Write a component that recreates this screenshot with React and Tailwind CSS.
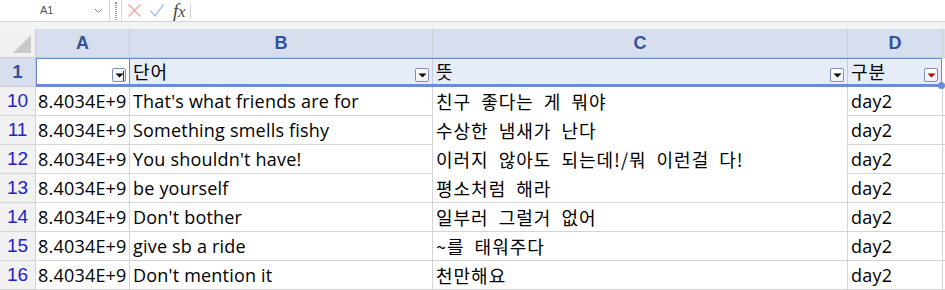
const cols = [
  { key: "A", w: "w-[94px]" },
  { key: "B", w: "w-[303px]" },
  { key: "C", w: "w-[415px]" },
  { key: "D", w: "w-[95px]" },
];

const rows = [
  ["10", "8.4034E+9", "That's what friends are for", "친구 좋다는 게 뭐야", "day2"],
  ["11", "8.4034E+9", "Something smells fishy", "수상한 냄새가 난다", "day2"],
  ["12", "8.4034E+9", "You shouldn't have!", "이러지 않아도 되는데!/뭐 이런걸 다!", "day2"],
  ["13", "8.4034E+9", "be yourself", "평소처럼 해라", "day2"],
  ["14", "8.4034E+9", "Don't bother", "일부러 그럴거 없어", "day2"],
  ["15", "8.4034E+9", "give sb a ride", "~를 태워주다", "day2"],
  ["16", "8.4034E+9", "Don't mention it", "천만해요", "day2"],
];

const font = { fontFamily: '"Open Sans", "Noto Sans CJK KR", sans-serif' };
const krFont = { fontFamily: '"Noto Sans CJK KR", "Open Sans", sans-serif' };
const labelFont = { fontFamily: '"Liberation Sans", sans-serif' };

function FilterButton({ red, sort }) {
  return (
    <div className="absolute bottom-[2px] right-[3px] flex h-[14px] w-[14px] items-end justify-center rounded-[2px] border border-[#7d90b8] bg-gradient-to-b from-white to-[#eef1f7] pb-[3px]">
      <svg width="9" height="5" viewBox="0 0 9 5">
        <path d="M0.5 0.5 L8.5 0.5 L4.5 4.5 Z" fill={red ? "#c00000" : "#000"} />
      </svg>
      {sort && <div className="absolute right-[1px] top-[2px] h-[10px] w-px bg-[#333]" />}
    </div>
  );
}

export default function App() {
  return (
    <div className="h-[290px] w-[945px] overflow-hidden bg-white text-black" style={font}>
      {/* formula bar */}
      <div className="flex h-[22px] items-stretch border-b border-[#d4d4d4] bg-white">
        <div className="flex w-[110px] items-center justify-between border-r border-[#d4d4d4] pl-[40px] pr-[6px]">
          <span className="text-[11px] text-[#555]" style={labelFont}>A1</span>
          <svg width="9" height="6" viewBox="0 0 9 6">
            <path d="M1 1 L4.5 4.5 L8 1" fill="none" stroke="#888" strokeWidth="1" />
          </svg>
        </div>
        <div className="flex w-[11px] items-center justify-center">
          <div className="h-[18px] w-[2px] border-x border-dotted border-[#999]" />
        </div>
        <div className="flex flex-1 items-center border-l border-[#d4d4d4] pl-[5px]">
          <svg width="15" height="15" viewBox="0 0 15 15" className="mr-[7px]">
            <path d="M1.5 1.5 L13.5 13.5 M13.5 1.5 L1.5 13.5" stroke="#f3a3a3" strokeWidth="1.4" />
          </svg>
          <svg width="16" height="15" viewBox="0 0 16 15" className="mr-[8px]">
            <path d="M1.5 7.5 L6 13 L14.5 1.5" fill="none" stroke="#a9c4ee" strokeWidth="1.5" />
          </svg>
          <span className="mr-[5px] text-[19px] italic leading-none text-[#444]" style={{ fontFamily: '"Liberation Serif", serif' }}>
            f<span className="text-[16px]">x</span>
          </span>
          <div className="h-[16px] w-px bg-[#d4d4d4]" />
        </div>
      </div>
      <div className="h-[7px] bg-[#f3f3f3]" />

      {/* column headers */}
      <div className="flex h-[29px] border-b border-[#c6cad3]">
        <div className="relative w-[36px] border-r border-[#c6cad3] bg-[#f1f1f1]">
          <div className="absolute bottom-[4px] right-[4px] h-0 w-0 border-b-[18px] border-l-[18px] border-b-[#c9c9c9] border-l-transparent" />
        </div>
        {cols.map((c) => (
          <div
            key={c.key}
            className={`${c.w} flex items-center justify-center border-r border-[#c9cdd6] bg-[#d7deee] text-[18px] font-bold text-[#34519a]`}
            style={labelFont}
          >
            {c.key}
          </div>
        ))}
        <div className="flex-1 bg-[#d7deee]" />
      </div>

      {/* row 1 (header row, selected) */}
      <div className="flex h-[29px]">
        <div
          className="flex w-[36px] items-center justify-center border-b border-r border-[#c6cad3] bg-[#d7deee] text-[18px] font-bold text-[#34519a]"
          style={labelFont}
        >
          1
        </div>
        <div className="relative flex w-[906px] border-y border-r border-[#6d8ad6] border-b-[3px] text-[18px] leading-[24px] tracking-[1px]" style={krFont}>
          <div className="relative w-[94px] border-x border-[#6d8ad6] bg-white">
            <FilterButton sort />
          </div>
          <div className="relative flex w-[303px] items-start border-r border-[#c3cbe0] bg-[#e6ecf8] pl-[3px]">
            단어
            <FilterButton />
          </div>
          <div className="relative flex w-[415px] items-start border-r border-[#c3cbe0] bg-[#e6ecf8] pl-[3px]">
            뜻
            <FilterButton />
          </div>
          <div className="relative flex flex-1 items-start bg-[#e6ecf8] pl-[3px]">
            구분
            <FilterButton red />
          </div>
          <div className="absolute -bottom-[5px] -right-[4px] h-[7px] w-[7px] rounded-full bg-[#6d8ad6]" />
        </div>
        <div className="flex-1 border-b border-[#d4d4d4]" />
      </div>

      {/* data rows */}
      {rows.map((r, i) => (
        <div key={r[0]} className="flex h-[29px] text-[18px] tracking-[0.2px]">
          <div className="flex w-[36px] items-center justify-center border-b border-r border-[#d4d4d4] bg-[#f1f1f1] text-[19px] tracking-normal text-[#2121c9]" style={labelFont}>
            {r[0]}
          </div>
          <div className="flex w-[94px] items-center border-b border-r border-[#d4d4d4] pl-[2px] whitespace-nowrap">
            {r[1]}
          </div>
          <div className="flex w-[303px] items-center border-b border-r border-[#d4d4d4] pl-[3px] whitespace-nowrap">
            {r[2]}
          </div>
          <div
            className={`flex w-[415px] items-center border-r border-[#d4d4d4] pl-[3px] tracking-[1px] [word-spacing:5px] whitespace-nowrap ${
              i < 3 ? "border-b border-b-white" : "border-b border-b-[#d4d4d4]"
            }`}
            style={krFont}
          >
            {r[3]}
          </div>
          <div className="flex w-[95px] items-center border-b border-r border-[#d4d4d4] pl-[3px]">
            {r[4]}
          </div>
          <div className="flex-1 border-b border-[#d4d4d4]" />
        </div>
      ))}
    </div>
  );
}
